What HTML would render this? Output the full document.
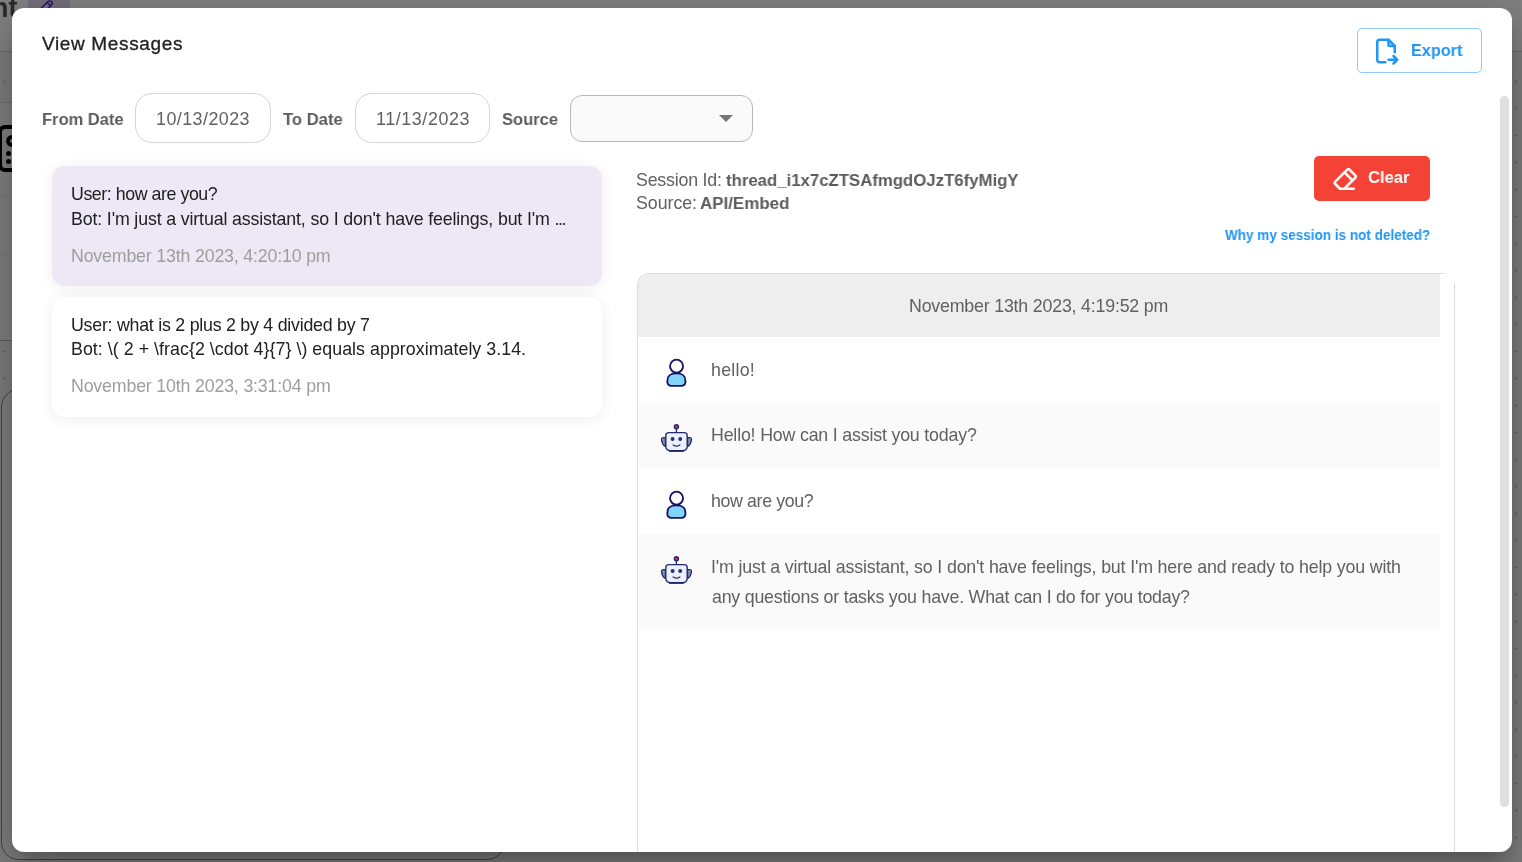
<!DOCTYPE html>
<html lang="en">
<head>
<meta charset="utf-8">
<title>View Messages</title>
<style>
*{box-sizing:border-box;margin:0;padding:0}
html,body{width:1522px;height:862px;overflow:hidden}
body{position:relative;background:#7b7b7b;font-family:"Liberation Sans",Arial,sans-serif;color:#212121}
.abs{position:absolute}
.t{position:absolute;white-space:nowrap;line-height:1;will-change:transform}
#bg{position:absolute;left:0;top:0;width:1522px;height:862px;background:#7d7d7d;overflow:hidden}
#dlg{position:absolute;left:12px;top:8px;width:1500px;height:844px;background:#fff;border-radius:12px;
 box-shadow:0 11px 15px -7px rgba(0,0,0,.2),0 24px 38px 3px rgba(0,0,0,.14),0 9px 46px 8px rgba(0,0,0,.12)}
#export{position:absolute;left:1357px;top:28px;width:125px;height:45px;border:1px solid rgba(33,150,243,.5);border-radius:5px}
#export svg{position:absolute;left:13.2px;top:6.85px}
#thumb{position:absolute;left:1500px;top:96px;width:9px;height:711px;border-radius:4.5px;background:#e0e0e0}
.date{position:absolute;top:93px;width:136px;height:50px;border:1px solid #d4d4d4;border-radius:17px;background:#fff}
#sel{position:absolute;left:570px;top:95px;width:183px;height:47px;border:1px solid #b8b8b8;border-radius:12px;background:#fafafa}
#sel i{position:absolute;left:148px;top:19px;width:0;height:0;border-left:7px solid transparent;border-right:7px solid transparent;border-top:7px solid #757575}
.card{position:absolute;left:52px;width:550px;height:120px;border-radius:13px;box-shadow:0 2px 14px 0 rgba(32,40,45,.08)}
#clear{position:absolute;left:1314px;top:156px;width:116px;height:45px;background:#f44336;border-radius:5px}
#clear svg{position:absolute;left:15.5px;top:9.4px}
#chat{position:absolute;left:637px;top:273px;width:803px;height:579px;border-left:1px solid #ddd;border-top:1px solid #ddd;border-top-left-radius:12px;overflow:hidden}
#chat .hd{position:absolute;left:0;top:0;width:802px;height:62.7px;background:#eee}
#chat .row{position:absolute;left:0;width:802px;height:65.9px}
#chat .alt{background:#fafafa}
</style>
</head>
<body>
<div id="bg">
 <div class="abs" style="left:0;top:0;width:1522px;height:51px;background:#808080"></div>
 <div class="abs" style="left:0;top:51px;width:1522px;height:1px;background:#666"></div>
 <div class="abs" style="left:0;top:102px;width:14px;height:239px;background:#7f7f7f;border-top:1px solid #6a6a6a;border-bottom:1px solid #5e5e5e"></div>
 <div class="abs" style="left:0;top:196px;width:14px;height:1px;background:#777"></div>
 <div class="abs" style="left:0;top:254px;width:14px;height:1px;background:#777"></div>
 <div class="t" style="left:-8.5px;top:-5.5px;font-size:27px;font-weight:bold;color:#2b2b2b">nt</div>
 <div class="abs" style="left:28px;top:-34px;width:42px;height:60px;background:#726f79"></div>
 <svg class="abs" style="left:36px;top:-3px" width="20" height="20" viewBox="0 0 24 24" fill="none" stroke="#2a0f6e" stroke-width="1.7" stroke-linecap="round" stroke-linejoin="round"><path d="M4 20h4l10.500 -10.500a1.500 1.500 0 0 0 -4 -4l-10.500 10.500v4"/><path d="M13.500 6.500l4 4"/></svg>
 <div class="abs" style="left:-2.5px;top:125px;width:60px;height:47px;border:4.5px solid #000;border-radius:7px"></div>
 <div class="abs" style="left:6px;top:134.5px;width:16px;height:12px;border:4px solid #000;border-radius:6px"></div>
 <div class="abs" style="left:6.3px;top:151.2px;width:5.2px;height:5.2px;border-radius:3px;background:#000"></div>
 <div class="abs" style="left:6.3px;top:158.5px;width:5.2px;height:5.2px;border-radius:3px;background:#000"></div>
 <div class="abs" style="left:0.5px;top:389px;width:504px;height:471px;border:1px solid #444;border-radius:18px;background:#7f7f7f"></div>
 <svg class="abs" style="left:0;top:0" width="1522" height="862"><g fill="#5c5c5c">
  <circle cx="4.3" cy="81.4" r="1"/><circle cx="4.3" cy="351.4" r="1"/><circle cx="4.3" cy="378.4" r="1"/>
  <circle cx="1516.3" cy="81.4" r="1"/><circle cx="1516.3" cy="108.4" r="1"/><circle cx="1516.3" cy="135.4" r="1"/><circle cx="1516.3" cy="162.4" r="1"/><circle cx="1516.3" cy="189.4" r="1"/><circle cx="1516.3" cy="216.4" r="1"/><circle cx="1516.3" cy="243.4" r="1"/><circle cx="1516.3" cy="270.4" r="1"/><circle cx="1516.3" cy="297.4" r="1"/><circle cx="1516.3" cy="324.4" r="1"/><circle cx="1516.3" cy="351.4" r="1"/><circle cx="1516.3" cy="378.4" r="1"/><circle cx="1516.3" cy="405.4" r="1"/><circle cx="1516.3" cy="432.4" r="1"/><circle cx="1516.3" cy="459.4" r="1"/><circle cx="1516.3" cy="486.4" r="1"/><circle cx="1516.3" cy="513.4" r="1"/><circle cx="1516.3" cy="540.4" r="1"/><circle cx="1516.3" cy="567.4" r="1"/><circle cx="1516.3" cy="594.4" r="1"/><circle cx="1516.3" cy="621.4" r="1"/><circle cx="1516.3" cy="648.4" r="1"/><circle cx="1516.3" cy="675.4" r="1"/><circle cx="1516.3" cy="702.4" r="1"/><circle cx="1516.3" cy="729.4" r="1"/><circle cx="1516.3" cy="756.4" r="1"/><circle cx="1516.3" cy="783.4" r="1"/><circle cx="1516.3" cy="810.4" r="1"/><circle cx="1516.3" cy="837.4" r="1"/>
 </g></svg>
</div>
<div id="dlg"></div>
<div id="export">
<svg width="30" height="30" viewBox="0 0 24 24" fill="none" stroke="#2196f3" stroke-width="2" stroke-linecap="round" stroke-linejoin="round"><path d="M14 3v4a1 1 0 0 0 1 1h4"/><path d="M11.5 21h-4.500a2 2 0 0 1 -2 -2v-14a2 2 0 0 1 2 -2h7l5 5v5m-5 6h7m-3 -3l3 3l-3 3"/></svg>
</div>
<div id="thumb"></div>
<div class="date" style="left:135px"></div>
<div class="date" style="left:355px;width:135px"></div>
<div id="sel"><i></i></div>
<div class="card" style="top:166px;background:#ede7f6"></div>
<div class="card" style="top:296.5px;height:120.3px;background:#fff"></div>
<div id="clear">
<svg width="30" height="30" viewBox="0 0 24 24" fill="none" stroke="#fff" stroke-width="2" stroke-linecap="round" stroke-linejoin="round"><path d="M19 19h-11l-4 -4a1 1 0 0 1 0 -1.410l10 -10a1 1 0 0 1 1.410 0l5 5a1 1 0 0 1 0 1.410l-9 9"/><path d="M18 12.300l-6.300 -6.300"/></svg>
</div>
<div id="chat">
 <div class="hd"></div>
 <div class="row" style="top:62.7px"></div>
 <div class="row alt" style="top:128.6px"></div>
 <div class="row" style="top:194.5px"></div>
 <div class="row alt" style="top:260.4px;height:95px"></div>
</div>
<div class="abs" style="left:1440px;top:273px;width:4px;height:1px;background:#ddd"></div>
<div class="abs" style="left:1444px;top:273px;width:3px;height:1px;background:#f0f0f0"></div>
<div class="abs" style="left:1454px;top:283px;width:1px;height:569px;background:#ddd"></div>

<svg width="0" height="0" style="position:absolute"><defs>
<g id="usr">
 <path d="M11.35 29 C11.35 23.2 14.3 21.4 20.4 21.4 C26.5 21.4 29.45 23.2 29.45 29 V29.9 A4 4 0 0 1 25.45 33.9 H15.35 A4 4 0 0 1 11.35 29.9 Z" fill="#81d4fa" stroke="#17115f" stroke-width="1.85" stroke-linejoin="round"/>
 <circle cx="20.55" cy="14.15" r="6.5" fill="#fff" stroke="#17115f" stroke-width="1.85"/>
</g>
<g id="bot">
 <path d="M9.4 19.6 H7.5 Q5.3 19.6 5.5 21.8 Q6.1 26.4 9.4 28.6 Z" fill="#8a93ad" stroke="#232a72" stroke-width="1.2" stroke-linejoin="round"/>
 <path d="M31.6 19.6 H33.5 Q35.7 19.6 35.5 21.8 Q34.9 26.4 31.6 28.6 Z" fill="#8a93ad" stroke="#232a72" stroke-width="1.2" stroke-linejoin="round"/>
 <path d="M20.4 10.5 V15" stroke="#1b1f6b" stroke-width="1.3"/>
 <path d="M12.8 14.6 H28.2 A3 3 0 0 1 31.2 17.6 V28.4 A4.4 4.4 0 0 1 26.8 32.8 H14.2 A4.4 4.4 0 0 1 9.8 28.4 V17.6 A3 3 0 0 1 12.8 14.6 Z" fill="#ecf0fa" stroke="#232a72" stroke-width="1.4"/>
 <path d="M13.5 33 H27.5" stroke="#1b1f6b" stroke-width="1.4" stroke-linecap="round"/>
 <circle cx="20.4" cy="8.8" r="2" fill="#f5325c" stroke="#232a72" stroke-width="1.5"/>
 <circle cx="16.6" cy="21.1" r="2" fill="#2a2f7a"/>
 <circle cx="24.2" cy="21.1" r="2" fill="#2a2f7a"/>
 <path d="M17.2 27 Q20.5 29.2 23.8 27" fill="none" stroke="#2a2f7a" stroke-width="1.4" stroke-linecap="round"/>
</g>
</defs></svg>

<svg class="abs" style="left:656px;top:352px" width="40" height="40" viewBox="0 0 40 40"><use href="#usr"/></svg>
<svg class="abs" style="left:656px;top:484px" width="40" height="40" viewBox="0 0 40 40"><use href="#usr"/></svg>
<svg class="abs" style="left:656px;top:418px" width="40" height="40" viewBox="0 0 40 40"><use href="#bot"/></svg>
<svg class="abs" style="left:656px;top:550px" width="40" height="40" viewBox="0 0 40 40"><use href="#bot"/></svg>
<div class="t" id="t_title" style="left:42.00px;top:34.32px;font-size:19.0px;font-weight:normal;color:#212121;-webkit-text-stroke:.3px #212121;letter-spacing:0.647px">View Messages</div>
<div class="t" id="t_export" style="left:1411.00px;top:42.16px;font-size:17.3px;font-weight:bold;color:#2196f3;transform:scaleX(0.9381);transform-origin:0 0">Export</div>
<div class="t" id="t_lfrom" style="left:42.00px;top:111.17px;font-size:17.4px;font-weight:bold;color:#5c5c5c;transform:scaleX(0.9493);transform-origin:0 0">From Date</div>
<div class="t" id="t_d1" style="left:156.00px;top:110.75px;font-size:17.9px;font-weight:normal;color:#616161;letter-spacing:0.445px">10/13/2023</div>
<div class="t" id="t_lto" style="left:283.00px;top:111.17px;font-size:17.4px;font-weight:bold;color:#5c5c5c;transform:scaleX(0.9570);transform-origin:0 0">To Date</div>
<div class="t" id="t_d2" style="left:376.00px;top:110.75px;font-size:17.9px;font-weight:normal;color:#616161;letter-spacing:0.584px">11/13/2023</div>
<div class="t" id="t_lsrc" style="left:502.00px;top:111.17px;font-size:17.4px;font-weight:bold;color:#5c5c5c;transform:scaleX(0.9511);transform-origin:0 0">Source</div>
<div class="t" id="t_c1a" style="left:71.00px;top:186.43px;font-size:17.8px;font-weight:normal;color:#212121;letter-spacing:-0.441px">User: how are you?</div>
<div class="t" id="t_c1b" style="left:71.00px;top:210.83px;font-size:17.8px;font-weight:normal;color:#212121;letter-spacing:-0.145px">Bot: I'm just a virtual assistant, so I don't have feelings, but I'm <span style="letter-spacing:-1.4px">...</span></div>
<div class="t" id="t_c1c" style="left:71.00px;top:248.03px;font-size:17.8px;font-weight:normal;color:#9e9e9e;letter-spacing:-0.181px">November 13th 2023, 4:20:10 pm</div>
<div class="t" id="t_c2a" style="left:71.00px;top:317.33px;font-size:17.8px;font-weight:normal;color:#212121;letter-spacing:-0.243px">User: what is 2 plus 2 by 4 divided by 7</div>
<div class="t" id="t_c2b" style="left:71.00px;top:341.23px;font-size:17.8px;font-weight:normal;color:#212121;letter-spacing:0.047px">Bot: \( 2 + \frac{2 \cdot 4}{7} \) equals approximately 3.14.</div>
<div class="t" id="t_c2c" style="left:71.00px;top:378.03px;font-size:17.8px;font-weight:normal;color:#9e9e9e;letter-spacing:-0.178px">November 10th 2023, 3:31:04 pm</div>
<div class="t" id="t_s1" style="left:636.00px;top:171.93px;font-size:17.8px;font-weight:normal;color:#616161;letter-spacing:-0.198px">Session Id:</div>
<div class="t" id="t_s1b" style="left:726.00px;top:172.27px;font-size:17.4px;font-weight:bold;color:#5c5c5c;transform:scaleX(0.9641);transform-origin:0 0">thread_i1x7cZTSAfmgdOJzT6fyMigY</div>
<div class="t" id="t_s2" style="left:636.00px;top:195.13px;font-size:17.8px;font-weight:normal;color:#616161;letter-spacing:-0.041px">Source:</div>
<div class="t" id="t_s2b" style="left:700.00px;top:195.47px;font-size:17.4px;font-weight:bold;color:#5c5c5c;transform:scaleX(0.9732);transform-origin:0 0">API/Embed</div>
<div class="t" id="t_clear" style="left:1368.00px;top:169.01px;font-size:17.0px;font-weight:bold;color:#fff;transform:scaleX(0.9736);transform-origin:0 0">Clear</div>
<div class="t" id="t_why" style="left:1225.00px;top:228.31px;font-size:14.4px;font-weight:bold;color:#2196f3;transform:scaleX(0.9402);transform-origin:0 0">Why my session is not deleted?</div>
<div class="t" id="t_hd" style="left:909.00px;top:297.93px;font-size:17.8px;font-weight:normal;color:#616161;letter-spacing:-0.193px">November 13th 2023, 4:19:52 pm</div>
<div class="t" id="t_m1" style="left:711.00px;top:361.53px;font-size:17.8px;font-weight:normal;color:#616161;letter-spacing:0.245px">hello!</div>
<div class="t" id="t_m2" style="left:711.00px;top:427.03px;font-size:17.8px;font-weight:normal;color:#616161;letter-spacing:-0.181px">Hello! How can I assist you today?</div>
<div class="t" id="t_m3" style="left:711.00px;top:492.63px;font-size:17.8px;font-weight:normal;color:#616161;letter-spacing:-0.368px">how are you?</div>
<div class="t" id="t_m4a" style="left:711.00px;top:558.53px;font-size:17.8px;font-weight:normal;color:#616161;letter-spacing:-0.161px">I'm just a virtual assistant, so I don't have feelings, but I'm here and ready to help you with</div>
<div class="t" id="t_m4b" style="left:712.00px;top:589.33px;font-size:17.8px;font-weight:normal;color:#616161;letter-spacing:-0.221px">any questions or tasks you have. What can I do for you today?</div>
</body>
</html>
